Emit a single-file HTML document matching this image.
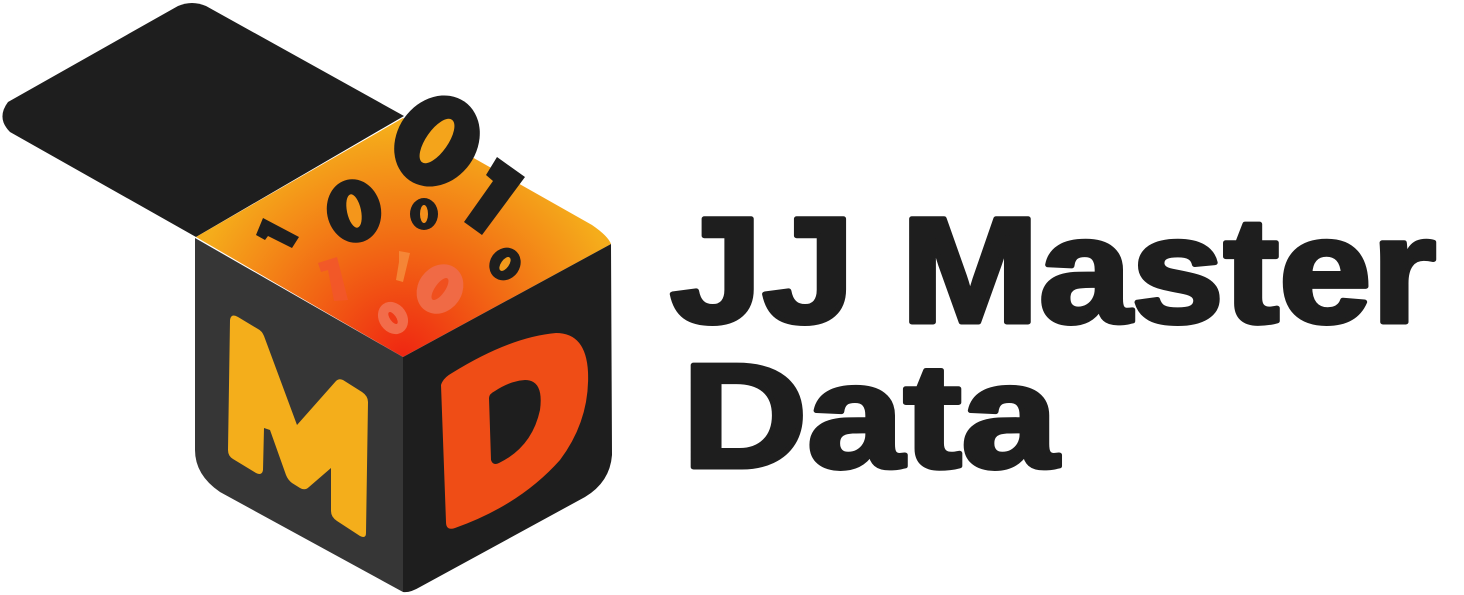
<!DOCTYPE html>
<html><head><meta charset="utf-8"><style>
html,body{margin:0;padding:0;background:#fff;width:1464px;height:595px;overflow:hidden}
</style></head><body>
<svg width="1464" height="595" viewBox="0 0 1464 595" xmlns="http://www.w3.org/2000/svg">
<defs>
<radialGradient id="g" cx="403" cy="357" r="230" gradientUnits="userSpaceOnUse">
<stop offset="0" stop-color="#ef2612"/>
<stop offset="0.5" stop-color="#f26a14"/>
<stop offset="1" stop-color="#f5ad1b"/>
</radialGradient>
</defs>
<path d="M8,102 L178,6 Q192,0 206,6 L404,116 L196,237 L10,132 Q-4,118 8,102 Z" fill="#1e1e1e"/>
<path d="M196,237 L403,118 L592,225 Q608,236 611,244 L403,357 Z" fill="url(#g)"/>
<path d="M195,238 L403,357 L403,592 L220,492 Q195,475 195,450 Z" fill="#363636"/>
<path d="M403,357 L611,244 L612,455 Q610,482 585,497 L420,587 Q410,593 403,592 Z" fill="#1e1e1e"/>
<path d="M230,320 Q231,313 238,317 L258,329 Q262,331 264,336 L297,425 L336,381 Q339,378 343,380 L362,392 Q368,396 368,402 L366,533 Q366,539 360,536 L337,521 Q331,517 331,511 L331,468 L309,487 Q305,491 300,488 L292,483 Q288,480 286,475 L270,430 L264,428 L263,470 Q262,476 256,473 L233,459 Q228,456 228,450 Z" fill="#f4ae1b"/>
<path d="M441,385 Q443,378 452,373 Q510,337 556,333 Q586,333 588,372 Q590,420 560,460 Q520,505 455,528 Q446,531 446,522 Z M489,398 L491,460 Q493,466 499,463 Q532,447 540,410 Q544,380 525,380 Q510,381 495,391 Q489,394 489,398 Z" fill="#ef4d16" fill-rule="evenodd"/>
<g>
<ellipse cx="437" cy="141" rx="40" ry="48" transform="rotate(35 437 141)" fill="#1e1e1e"/>
<ellipse cx="437" cy="141" rx="11" ry="26" transform="rotate(35 437 141)" fill="#f4a41b"/>
<path d="M497,157 L525,177 L482,235 L464,222 L493,181 L486,175 Z" fill="#1e1e1e"/>
<ellipse cx="354" cy="211" rx="27" ry="32" transform="rotate(-12 354 211)" fill="#1e1e1e"/>
<ellipse cx="354" cy="211" rx="7" ry="17" transform="rotate(-12 354 211)" fill="#f4961b"/>
<path d="M263,218 L299,237 L292,248 L268,236 L265,240 L256,235 Z" fill="#1e1e1e"/>
<ellipse cx="424" cy="214" rx="14" ry="16" fill="#1e1e1e"/>
<ellipse cx="424" cy="214" rx="4" ry="9" fill="#f4901b"/>
<ellipse cx="505" cy="264" rx="15" ry="17" transform="rotate(35 505 264)" fill="#1e1e1e"/>
<ellipse cx="505" cy="264" rx="4" ry="8" transform="rotate(35 505 264)" fill="#f39a1b"/>
<path d="M318,263 L337,257 L348,300 L334,301 L328,270 L321,272 Z" fill="#f2562a" opacity="0.9"/>
<path d="M399,251 L410,253 L403,282 L396,280 L399,262 Z" fill="#f5893a" opacity="0.9"/>
<ellipse cx="440" cy="289" rx="22" ry="26" transform="rotate(35 440 289)" fill="#f06a45"/>
<ellipse cx="440" cy="289" rx="5" ry="13" transform="rotate(35 440 289)" fill="#f0501e"/>
<ellipse cx="393" cy="318" rx="14" ry="17" transform="rotate(-35 393 318)" fill="#f26c4a"/>
<ellipse cx="393" cy="318" rx="3" ry="7" transform="rotate(-35 393 318)" fill="#f03a16"/>
</g>
<g font-family="Liberation Sans, sans-serif" font-weight="bold" fill="#1e1e1e" stroke="#1e1e1e" stroke-width="5" stroke-linejoin="round">
<text x="670" y="322" font-size="150" textLength="766" lengthAdjust="spacingAndGlyphs">JJ Master</text>
<text x="682" y="467" font-size="148" textLength="376" lengthAdjust="spacingAndGlyphs">Data</text>
</g>
</svg>
</body></html>
